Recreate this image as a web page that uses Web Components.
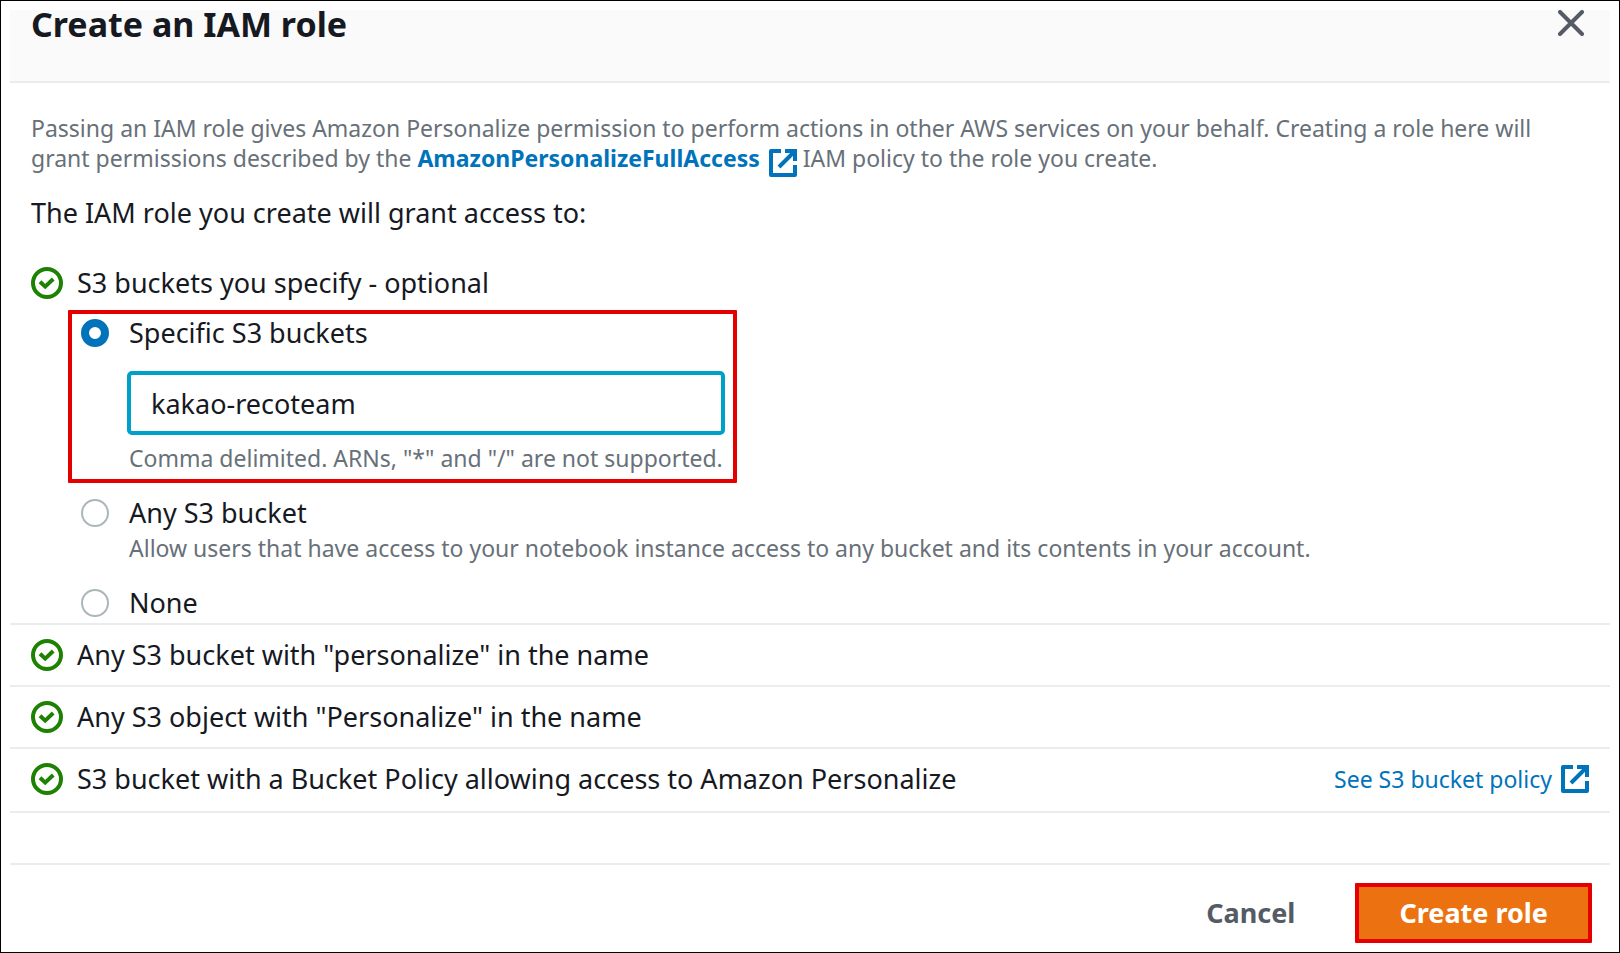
<!DOCTYPE html>
<html lang="en">
<head>
<meta charset="utf-8">
<meta name="viewport" content="width=device-width, initial-scale=1">
<title>Create an IAM role</title>
<style>
  body { margin: 0; background: #fff; font-family: "Noto Sans", "Open Sans", sans-serif; }
</style>
</head>
<body>
<iam-dialog>
  <iam-header slot="header">Create an IAM role</iam-header>
  <iam-intro></iam-intro>
  <grant-row>S3 buckets you specify - optional</grant-row>
  <bucket-scope></bucket-scope>
  <grant-row ruled>Any S3 bucket with "personalize" in the name</grant-row>
  <grant-row ruled>Any S3 object with "Personalize" in the name</grant-row>
  <grant-row ruled last>S3 bucket with a Bucket Policy allowing access to Amazon Personalize
    <external-link slot="action">See S3 bucket policy</external-link>
  </grant-row>
  <iam-footer slot="footer"></iam-footer>
</iam-dialog>

<script>
const TOKENS = `
  :host { --ink: #16191f; --muted: #687078; --link: #0073bb; --rule: #eaeded; --mark: #e50000; }
  * { box-sizing: border-box; }
`;

function define(name, markup) {
  const template = document.createElement('template');
  template.innerHTML = markup;
  customElements.define(name, class extends HTMLElement {
    constructor() {
      super();
      this.attachShadow({ mode: 'open' }).append(template.content.cloneNode(true));
    }
  });
}

define('iam-dialog', `
  <style>${TOKENS}
    :host { display: flex; flex-direction: column; box-sizing: border-box; min-height: 100vh;
      padding: 9px; border: 1px solid #000; background: #fff; color: var(--ink); }
    main { flex: 1; }
  </style>
  <slot name="header"></slot>
  <main><slot></slot></main>
  <slot name="footer"></slot>
`);

define('iam-header', `
  <style>${TOKENS}
    :host { display: flex; justify-content: space-between; align-items: flex-start;
      padding: 0 26px 43px 21px; background: #fafafa; border-bottom: 2px solid var(--rule); }
    h1 { margin: 0; font-size: 34px; line-height: 28px; font-weight: 700; color: var(--ink); }
    button { display: block; padding: 0; border: 0; background: none; cursor: pointer; }
    svg { display: block; width: 26px; height: 26px; }
  </style>
  <h1><slot></slot></h1>
  <button type="button" aria-label="Close">
    <svg viewBox="0 0 26 26" fill="none" stroke="#545b64" stroke-width="4" stroke-linecap="round"><path d="M2 2 24 24M24 2 2 24"/></svg>
  </button>
`);

define('external-link', `
  <style>${TOKENS}
    :host { display: inline; color: var(--link); }
    a { color: inherit; text-decoration: none; }
    svg { width: 28px; height: 28px; margin-left: 3px; vertical-align: var(--icon-drop, -5px); }
  </style>
  <a href="#"><slot></slot> <svg viewBox="0 0 28 28" fill="none" stroke="currentColor" stroke-width="4"><path stroke-linejoin="round" d="M12 2H2V26H26V16"/><path d="M16 2H26V12M25 3 10 18"/></svg></a>
`);

define('iam-intro', `
  <style>${TOKENS}
    :host { display: block; padding: 30px 21px 22px; }
    p { margin: 0; font-size: 23px; line-height: 30px; color: var(--muted); }
    external-link { font-weight: 700; --icon-drop: -10px; }
    h2 { margin: 18px 0 0; font-size: 27px; line-height: 36px; font-weight: 400; color: var(--ink); }
  </style>
  <p>Passing an IAM role gives Amazon Personalize permission to perform actions in other AWS services on your behalf. Creating a role here will grant permissions described by the <external-link>AmazonPersonalizeFullAccess</external-link> IAM policy to the role you create.</p>
  <h2>The IAM role you create will grant access to:</h2>
`);

define('grant-row', `
  <style>${TOKENS}
    :host { display: flex; align-items: center; gap: 14px; box-sizing: border-box;
      padding: 12px 21px 9px; font-size: 27px; line-height: 36px; color: var(--ink); }
    :host([ruled]) { padding-bottom: 12px; border-top: 2px solid var(--rule); }
    :host([last]) { padding-bottom: 14px; border-bottom: 2px solid var(--rule); }
    svg { flex: none; width: 32px; height: 32px; }
    .text { flex: 1; }
    ::slotted([slot=action]) { font-size: 23px; line-height: 30px; white-space: nowrap; }
  </style>
  <svg viewBox="0 0 32 32" fill="none" stroke="#1d8102" stroke-width="4" role="img" aria-label="Granted"><circle cx="16" cy="16" r="14"/><path d="m9 14.8 5.2 4.8 8-7.6"/></svg>
  <span class="text"><slot></slot></span>
  <slot name="action"></slot>
`);

define('bucket-choice', `
  <style>${TOKENS}
    :host { display: block; }
    label { display: grid; grid-template-columns: 28px 1fr; column-gap: 20px; align-items: center;
      font-size: 27px; line-height: 36px; color: var(--ink); }
    input { appearance: none; width: 28px; height: 28px; margin: 0; border: 2px solid #aab7b8;
      border-radius: 50%; background: #fff; }
    input:checked { border: 8px solid var(--link); }
    .details { padding-left: 48px; font-size: 23px; line-height: 30px; color: var(--muted); }
  </style>
  <label><input type="radio" name="scope"><span><slot></slot></span></label>
  <div class="details"><slot name="details"></slot></div>
`);

define('bucket-scope', `
  <style>${TOKENS}
    :host { display: block; padding: 0 21px 2px 58px; }
    .marked { width: 669px; max-width: 100%; padding: 1px 8px 6px 9px; border: 4px solid var(--mark); border-radius: 1px; }
    .field { display: block; margin-left: -2px; }
    .field input { display: block; width: 100%; height: 64px; margin: 20px 0 8px; padding: 0 20px;
      border: 4px solid #00a1c9; border-radius: 5px; outline: 0; background: #fff;
      font: 27px "Noto Sans", "Open Sans", sans-serif; color: var(--ink); }
    .others { display: grid; gap: 22px; padding: 12px 0 0 13px; }
    .note { display: block; margin-top: 2px; }
  </style>
  <div class="marked">
    <bucket-choice checked>Specific S3 buckets
      <div slot="details">
        <div class="field"><input type="text" value="kakao-recoteam" aria-label="Specific S3 buckets" aria-describedby="hint"></div>
        <span id="hint">Comma delimited. ARNs, "*" and "/" are not supported.</span>
      </div>
    </bucket-choice>
  </div>
  <div class="others">
    <bucket-choice>Any S3 bucket
      <span slot="details" class="note">Allow users that have access to your notebook instance access to any bucket and its contents in your account.</span>
    </bucket-choice>
    <bucket-choice>None</bucket-choice>
  </div>
`);

// Radios live in separate shadow roots, so the group keeps them exclusive.
document.querySelectorAll('bucket-scope').forEach(scope => {
  const choices = [...scope.shadowRoot.querySelectorAll('bucket-choice')];
  choices.forEach(choice => {
    const radio = choice.shadowRoot.querySelector('input');
    radio.checked = choice.hasAttribute('checked');
    radio.addEventListener('change', () => choices.forEach(other => {
      other.shadowRoot.querySelector('input').checked = other === choice;
    }));
  });
});

define('iam-footer', `
  <style>${TOKENS}
    :host { display: flex; justify-content: flex-end; align-items: center; gap: 16px;
      padding: 18px 18px 0; border-top: 2px solid var(--rule); }
    button { height: 60px; padding: 0 40px; border: 4px solid transparent; border-radius: 1px; background: none;
      font: 700 27px/36px "Noto Sans", "Open Sans", sans-serif; color: #545b64; white-space: nowrap; cursor: pointer; }
    .primary { min-width: 236px; border-color: var(--mark); background: #ec7211; color: #fff; }
  </style>
  <button type="button">Cancel</button>
  <button type="button" class="primary">Create role</button>
`);
</script>
</body>
</html>
